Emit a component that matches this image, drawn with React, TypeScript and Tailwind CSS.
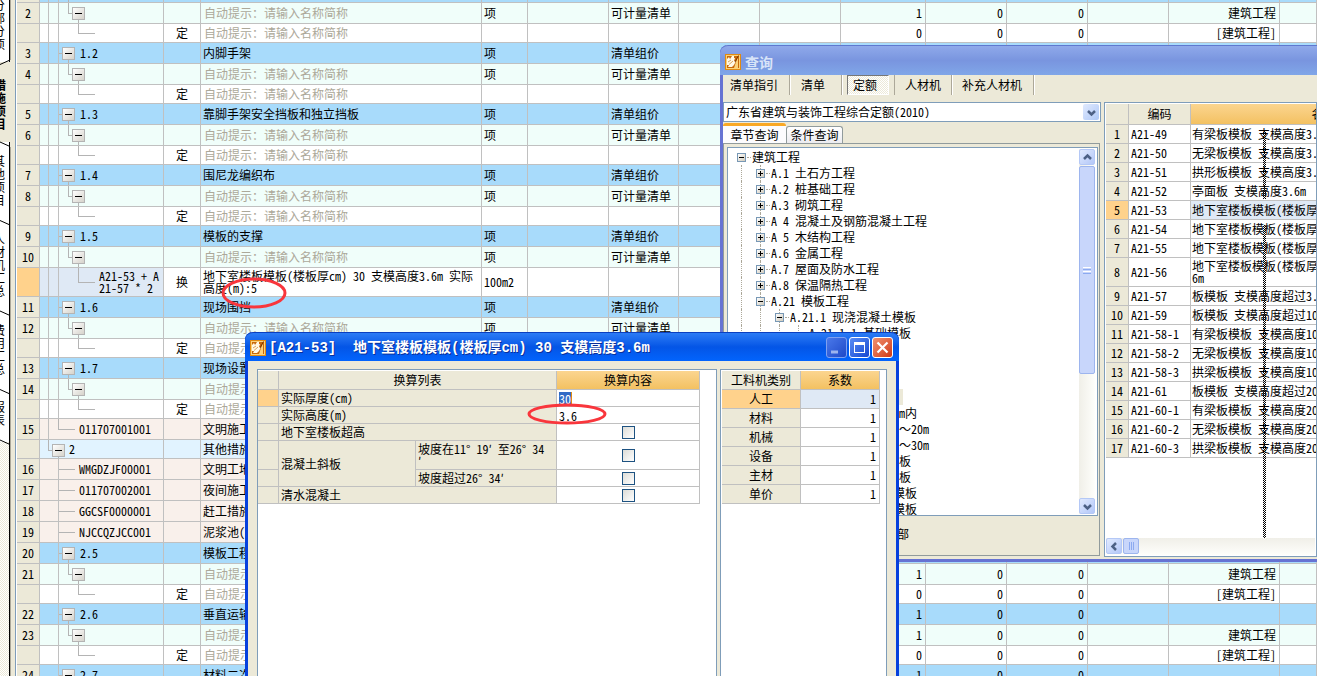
import clsx from "clsx";
import { ReactNode } from "react";

type RowKind = "group" | "item" | "quota" | "selected" | "measure" | "root" | "cut";

interface MainRow {
  kind: RowKind;
  no?: string;
  code?: string;
  name?: string;
  // section 2 of the list has one guide line less than section 1
  section?: 1 | 2;
  last?: boolean;
}

const HINT = "自动提示：请输入名称简称";

const MAIN_ROWS: MainRow[] = [
  { kind: "cut" },
  { kind: "item", no: "2" },
  { kind: "quota" },
  { kind: "group", no: "3", code: "1.2", name: "内脚手架" },
  { kind: "item", no: "4" },
  { kind: "quota" },
  { kind: "group", no: "5", code: "1.3", name: "靠脚手架安全挡板和独立挡板" },
  { kind: "item", no: "6" },
  { kind: "quota" },
  { kind: "group", no: "7", code: "1.4", name: "围尼龙编织布" },
  { kind: "item", no: "8" },
  { kind: "quota" },
  { kind: "group", no: "9", code: "1.5", name: "模板的支撑" },
  { kind: "item", no: "10" },
  { kind: "selected" },
  { kind: "group", no: "11", code: "1.6", name: "现场围挡" },
  { kind: "item", no: "12" },
  { kind: "quota" },
  { kind: "group", no: "13", code: "1.7", name: "现场设置" },
  { kind: "item", no: "14" },
  { kind: "quota" },
  { kind: "measure", no: "15", code: "011707001001", name: "文明施工", last: true },
  { kind: "root", code: "2", name: "其他措施费" },
  { kind: "measure", no: "16", code: "WMGDZJF00001", name: "文明工地增加费", section: 2 },
  { kind: "measure", no: "17", code: "011707002001", name: "夜间施工", section: 2 },
  { kind: "measure", no: "18", code: "GGCSF0000001", name: "赶工措施", section: 2 },
  { kind: "measure", no: "19", code: "NJCCQZJCC001", name: "泥浆池(槽)砌筑", section: 2 },
  { kind: "group", no: "20", code: "2.5", name: "模板工程", section: 2 },
  { kind: "item", no: "21", section: 2 },
  { kind: "quota", section: 2 },
  { kind: "group", no: "22", code: "2.6", name: "垂直运输", section: 2 },
  { kind: "item", no: "23", section: 2 },
  { kind: "quota", section: 2 },
  { kind: "group", no: "24", code: "2.7", name: "材料二次运输", section: 2 },
];

const ROW_STYLE: Record<RowKind, string> = {
  cut: "h-[3px] bg-[#a8dbfb]",
  group: "h-[21px] bg-[#a8dbfb]",
  item: "h-[21px] bg-[#f0fefa]",
  quota: "h-[19px] bg-white",
  selected: "h-[29px] bg-white",
  measure: "h-[21px] bg-[#f9f0eb]",
  root: "h-[19px] bg-[#e1f3ff]",
};

const CELL = "border-r border-b border-[#c0c0c0] p-0 overflow-hidden whitespace-nowrap";

function AppIcon() {
  return (
    <svg width="16" height="16" viewBox="0 0 16 16" className="shrink-0">
      <rect width="16" height="16" fill="#e08a12" />
      <rect x="1" y="1" width="14" height="14" fill="#fbd27a" />
      <rect x="2" y="2" width="12" height="12" fill="#c8690c" />
      <path d="M2 5 L4 3 L5 5 L7 2 L9 2 L9 4 L10 4 L9 7 L11 7 L9 11 L7 13 L3 13 L4 11 L2 11Z" fill="#fff8e6" />
      <path d="M3 8 L6 6 M4 10.500 L8 7" stroke="#d9a25c" strokeWidth="1" />
      <path d="M13 3 L11 8 L9 14 L13 14Z" fill="#fbd27a" />
      <path d="M13.500 1.500 L10 8" stroke="#7a3600" strokeWidth="1" />
    </svg>
  );
}

function Collapse({ line }: { line: boolean }) {
  return (
    <button
      aria-label="折叠"
      className={clsx(
        "relative mt-1 size-[13px] shrink-0 self-start border border-[#b4b4b4] bg-gradient-to-br from-white to-[#d6d3cb]",
        line && "after:absolute after:top-3 after:left-[5px] after:h-1 after:w-px after:bg-[#b4b4b4]"
      )}
    >
      <span className="mx-auto block h-px w-[7px] bg-black" />
    </button>
  );
}

function Stub({ w, h, d }: { w: number; h: number; d: string }) {
  return (
    <svg width={w} height={h} className="shrink-0 self-start">
      <path d={d} fill="none" stroke="#b4b4b4" shapeRendering="crispEdges" />
    </svg>
  );
}

function TreeCell({ row }: { row: MainRow }) {
  const { kind, code, section = 1, last } = row;
  const guide = <span className="w-[9px] shrink-0 self-stretch border-r border-[#c0c0c0]" />;
  if (kind === "root") {
    return (
      <div className="flex h-[18px] items-center overflow-hidden">
        <Stub w={12} h={18} d="M8.5 0 V10.5 H12" />
        <Collapse line />
        <span className="pl-1">{code}</span>
      </div>
    );
  }
  return (
    <div className={clsx("flex items-center overflow-hidden", kind === "selected" ? "h-7" : kind === "quota" ? "h-[18px]" : kind === "cut" ? "h-[2px]" : "h-5")}>
      {section === 1 ? guide : <span className="w-[9px] shrink-0" />}
      {last ? (
        <Stub w={26} h={20} d="M9.5 0 V10.5 H26" />
      ) : (
        <span className="w-[10px] shrink-0 self-stretch border-r border-[#c0c0c0]" />
      )}
      {kind === "cut" && <Stub w={12} h={2} d="M9.5 0 V2" />}
      {kind === "group" && (
        <>
          <Stub w={3} h={20} d="M0 10.5 H3" />
          <Collapse line />
          <span className="pl-[5px]">{code}</span>
        </>
      )}
      {kind === "item" && (
        <>
          <Stub w={13} h={20} d="M9.5 0 V10.5 H13" />
          <Collapse line />
        </>
      )}
      {kind === "quota" && <Stub w={36} h={18} d="M19.5 0 V9.5 H36" />}
      {kind === "selected" && (
        <>
          <Stub w={36} h={28} d="M19.5 0 V14.5 H36" />
          <span className="pl-1">
            A21-53 + A<br />
            21-57 * 2
          </span>
        </>
      )}
      {kind === "measure" && (
        <>
          {!last && <Stub w={16} h={20} d="M0 10.5 H16" />}
          <span className="pl-1">{code}</span>
        </>
      )}
    </div>
  );
}

function MainTable() {
  return (
    <table className="w-full table-fixed border-separate border-spacing-0">
      <colgroup>
        <col className="w-[23px]" />
        <col className="w-[124px]" />
        <col className="w-[37px]" />
        <col className="w-[281px]" />
        <col className="w-[46px]" />
        <col className="w-[81px]" />
        <col className="w-[70px]" />
        <col className="w-[81px]" />
        <col className="w-[81px]" />
        <col className="w-[85px]" />
        <col className="w-[81px]" />
        <col className="w-[81px]" />
        <col className="w-[81px]" />
        <col className="w-[111px]" />
        <col />
      </colgroup>
      <tbody>
        {MAIN_ROWS.map((row, i) => {
          const { kind } = row;
          const hint = kind === "item" || kind === "quota";
          const counted = hint || kind === "group";
          return (
            <tr key={i} className={ROW_STYLE[kind]}>
              <th className={clsx(CELL, "text-center font-normal", kind === "selected" ? "bg-[#ffd28c]" : "bg-[#ece9d8]")}>{row.no}</th>
              <td className={clsx(CELL, kind === "selected" && "bg-[#dfe9f5]")}>
                <TreeCell row={row} />
              </td>
              <td className={clsx(CELL, "text-center")}>{kind === "quota" ? "定" : kind === "selected" ? "换" : ""}</td>
              <td className={clsx(CELL, hint ? "pl-[3px] text-[#aca899]" : "pl-[2px]")}>
                {kind === "selected" ? (
                  <>
                    地下室楼板模板(楼板厚cm) 30 支模高度3.6m 实际
                    <br />
                    高度(m):5
                  </>
                ) : hint ? (
                  HINT
                ) : (
                  row.name
                )}
              </td>
              <td className={clsx(CELL, "pl-[2px]")}>{kind === "item" || kind === "group" ? "项" : kind === "selected" ? "100m2" : ""}</td>
              <td className={CELL} />
              <td className={clsx(CELL, "pl-[2px]")}>{kind === "item" ? "可计量清单" : kind === "group" ? "清单组价" : ""}</td>
              <td className={CELL} />
              <td className={CELL} />
              <td className={clsx(CELL, "pr-[3px] text-right")}>{counted && (kind === "quota" ? "0" : "1")}</td>
              <td className={clsx(CELL, "pr-[3px] text-right")}>{counted && "0"}</td>
              <td className={clsx(CELL, "pr-[3px] text-right")}>{counted && "0"}</td>
              <td className={CELL} />
              <td className={clsx(CELL, "pr-[3px] text-right")}>{kind === "item" ? "建筑工程" : kind === "quota" ? "[建筑工程]" : ""}</td>
              <td className={CELL} />
            </tr>
          );
        })}
      </tbody>
    </table>
  );
}

const SIDE_TABS = [
  { label: "分部分项", box: "h-[62px] bg-white pb-3" },
  { label: "措施项目", box: "h-20 bg-[#ece9d8] pb-3 font-bold", active: true },
  { label: "其他项目", box: "h-20 bg-white pb-4" },
  { label: "人材机汇总", box: "h-[91px] bg-white pb-4" },
  { label: "费用汇总", box: "h-[78px] bg-white pb-4" },
  { label: "报表", box: "h-[51px] bg-white pb-4" },
];

function SideTabs() {
  return (
    <nav className="relative flex w-[17px] shrink-0 flex-col border-r border-white bg-[#ece9d8]">
      {SIDE_TABS.map((tab) => (
        <button key={tab.label} className={clsx("flex w-[10px] shrink-0 items-end justify-end overflow-hidden pr-1", tab.box, !tab.active && "border-r border-black")}>
          <span className="w-3 shrink-0 leading-[13px] break-all">{tab.label}</span>
        </button>
      ))}
      <div className="w-[10px] grow border-r border-black bg-[image:repeating-conic-gradient(#fff_0_25%,#ece9d8_0_50%)] bg-[length:2px_2px]" />
      <svg className="absolute inset-0 h-full w-4">
        <g fill="none" stroke="#000">
          <path d="M0 64.5 L10 60 M0 142 L10 146.500 M0 220.500 L10 225 M0 311 L10 315.500 M0 389.500 L10 394 M0 440 L10 444.500" />
        </g>
        <path d="M10.5 0 V60 M10.5 147 V2000" stroke="#aca899" />
        <path d="M15.500 0 V2000" stroke="#7f9db9" />
      </svg>
    </nav>
  );
}

const QUERY_TREE: { level: number; label: string; to?: string; open?: boolean; leaf?: boolean; selected?: boolean }[] = [
  { level: 0, label: "建筑工程", open: true },
  { level: 1, label: "A.1 土石方工程" },
  { level: 1, label: "A.2 桩基础工程" },
  { level: 1, label: "A.3 砌筑工程" },
  { level: 1, label: "A 4 混凝土及钢筋混凝土工程" },
  { level: 1, label: "A 5 木结构工程" },
  { level: 1, label: "A.6 金属工程" },
  { level: 1, label: "A.7 屋面及防水工程" },
  { level: 1, label: "A.8 保温隔热工程" },
  { level: 1, label: "A.21 模板工程", open: true },
  { level: 2, label: "A.21.1 现浇混凝土模板", open: true },
  { level: 3, label: "A.21.1.1 基础模板", leaf: true },
  { level: 3, label: "A.21.1.2 柱模", leaf: true },
  { level: 3, label: "A.21.1.3 梁模", leaf: true },
  { level: 3, label: "墙模板", leaf: true },
  { level: 3, label: "A.21.1.4 板模", leaf: true, selected: true },
  { level: 3, label: "A.21.1.5 高度10m内", leaf: true },
  { level: 3, label: "A.21.1.6 高度10", to: "20m", leaf: true },
  { level: 3, label: "A.21.1.7 高度20", to: "30m", leaf: true },
  { level: 3, label: "A.21.1.8 楼梯模板", leaf: true },
  { level: 3, label: "A.21.1.9 台阶模板", leaf: true },
  { level: 3, label: "A.21.1.10 压顶模板", leaf: true },
  { level: 3, label: "A.21.1.11 栏板模板", leaf: true },
];

function QueryTree() {
  return (
    <ul className="grow overflow-hidden pt-px pl-1">
      {QUERY_TREE.map((node) => (
        <li key={node.label} className="flex h-4 items-center whitespace-nowrap">
          {Array.from({ length: node.level }, (_, i) => (
            <span key={i} className="flex w-[19px] shrink-0 justify-center self-stretch">
              <span className="border-l border-dotted border-[#aca899]" />
            </span>
          ))}
          <span className="relative flex w-[19px] shrink-0 items-center justify-center self-stretch">
            {node.level > 0 && <span className="absolute top-0 left-[9px] h-full border-l border-dotted border-[#aca899]" />}
            <span className="absolute top-2 right-0 w-1 border-t border-dotted border-[#aca899]" />
            {!node.leaf && (
              <button aria-label="展开" className="relative flex size-[9px] items-center justify-center border border-[#7898b5] bg-gradient-to-br from-white to-[#d0cabb]">
                <svg width="5" height="5" shapeRendering="crispEdges">
                  <path d={node.open ? "M0 2.500 H5" : "M0 2.500 H5 M2.500 0 V5"} stroke="#000" />
                </svg>
              </button>
            )}
          </span>
          <span className={clsx("pl-px", node.selected && "bg-[#ece9d8] py-[2px] pr-4")}>
            {node.label}
            {node.to && (
              <>
                <span className="[font-feature-settings:normal]">～</span>
                {node.to}
              </>
            )}
          </span>
        </li>
      ))}
    </ul>
  );
}

const CHEVRON = {
  up: "M3 8 L6.500 4.500 L10 8",
  down: "M3 5 L6.500 8.500 L10 5",
  left: "M8 3 L4.500 6.500 L8 10",
};

function ScrollButton({ dir }: { dir: keyof typeof CHEVRON }) {
  return (
    <button aria-label={dir} className="flex size-4 shrink-0 items-center justify-center rounded-[2px] border border-[#b4c8f6] bg-gradient-to-br from-[#e1eafe] to-[#b3c7f8]">
      <svg width="13" height="13">
        <path d={CHEVRON[dir]} fill="none" stroke="#4d6185" strokeWidth="2.500" />
      </svg>
    </button>
  );
}

const QUOTAS = [
  ["A21-49", "有梁板模板 支模高度3.6m"],
  ["A21-50", "无梁板模板 支模高度3.6m"],
  ["A21-51", "拱形板模板 支模高度3.6m"],
  ["A21-52", "亭面板 支模高度3.6m"],
  ["A21-53", "地下室楼板模板(楼板厚cm) 30 支模高度3.6m"],
  ["A21-54", "地下室楼板模板(楼板厚cm) 40 支模高度3.6m"],
  ["A21-55", "地下室楼板模板(楼板厚cm) 50 支模高度3.6m"],
  ["A21-56", "地下室楼板模板(楼板厚cm) 50以上 支模高度3.\n6m"],
  ["A21-57", "板模板 支模高度超过3.6m 每增加1m"],
  ["A21-59", "板模板 支模高度超过10m 每增加1m"],
  ["A21-58-1", "有梁板模板 支模高度10m"],
  ["A21-58-2", "无梁板模板 支模高度10m"],
  ["A21-58-3", "拱梁板模板 支模高度10m"],
  ["A21-61", "板模板 支模高度超过20m"],
  ["A21-60-1", "有梁板模板 支模高度20m"],
  ["A21-60-2", "无梁板模板 支模高度20m"],
  ["A21-60-3", "拱梁板模板 支模高度20m"],
];

const ORANGE_HEAD = "bg-gradient-to-b from-[#fbd58f] to-[#f3c161]";
const DITHER = "bg-[image:repeating-conic-gradient(#000_0_25%,transparent_0_50%)] bg-[length:2px_2px]";

function QuotaTable() {
  return (
    <div className="relative flex h-[455px] grow flex-col overflow-hidden border border-[#7f9db9] bg-white p-px">
      <table className="w-[351px] table-fixed border-separate border-spacing-0">
        <colgroup>
          <col className="w-[23px]" />
          <col className="w-[62px]" />
          <col />
        </colgroup>
        <thead>
          <tr className="h-[21px] bg-[#ece9d8]">
            <th className={CELL} />
            <th className={clsx(CELL, "font-normal")}>编码</th>
            <th className={clsx(CELL, ORANGE_HEAD, "font-normal")}>名称</th>
          </tr>
        </thead>
        <tbody>
          {QUOTAS.map(([code, name], i) => (
            <tr key={code} className={i === 7 ? "h-[29px]" : "h-[19px]"}>
              <th className={clsx(CELL, "font-normal", i === 4 ? "bg-[#ffd28c]" : "bg-[#ece9d8]")}>{i + 1}</th>
              <td className={clsx(CELL, "pl-[2px]")}>{code}</td>
              <td className={clsx(CELL, "pl-px whitespace-pre", i === 4 && "bg-[#dfe9f5]")}>{name}</td>
            </tr>
          ))}
        </tbody>
      </table>
      <div className={clsx("absolute top-7 left-[158px] h-[68px] w-[3px]", DITHER)} />
      <div className={clsx("absolute top-[122px] left-[158px] h-[313px] w-[3px]", DITHER)} />
      <div className="mt-auto flex h-[17px] gap-px bg-gradient-to-b from-[#f0efe8] to-[#fefefb]">
        <ScrollButton dir="left" />
        <button aria-label="滚动条" className="flex size-4 items-center justify-center gap-px rounded-[2px] border border-[#9db5ee] bg-[#c8d6fb]">
          <span className="h-2 w-px bg-[#8caaf0]" />
          <span className="h-2 w-px bg-[#8caaf0]" />
          <span className="h-2 w-px bg-[#8caaf0]" />
        </button>
      </div>
    </div>
  );
}

function ToolButton({ children, className }: { children: ReactNode; className: string }) {
  return (
    <div className={clsx("flex border-[#aca899] shadow-[1px_0_0_#fff]", className)}>
      <button className="h-5">{children}</button>
    </div>
  );
}

function QueryWindow() {
  return (
    <section className="absolute top-[45px] right-0 left-[720px] rounded-tl-lg border-b-[3px] border-l-[3px] border-[#6673d3] bg-[#ece9d8]">
      <header className="-ml-[3px] flex h-[30px] items-center gap-1 rounded-tl-lg border-t border-[#5f78cf] bg-gradient-to-b from-[#8fa9ea] via-[#7995df] to-[#80a6e8] pt-[2px] pl-[5px]">
        <AppIcon />
        <h2 className="text-sm leading-4 font-bold text-[#d8e4f8]">查询</h2>
      </header>
      <div className="flex h-[27px] items-start gap-[5px]">
        <ToolButton className="border-r pr-[11px] pl-[7px]">清单指引</ToolButton>
        <ToolButton className="w-[47px] border-r pl-[6px]">清单</ToolButton>
        <button className="h-5 w-[42px] border border-t-[#777] border-r-white border-b-white border-l-[#777] bg-[image:repeating-conic-gradient(#fff_0_25%,#ece9d8_0_50%)] bg-[length:2px_2px] pl-[5px] text-left">
          定额
        </button>
        <ToolButton className="w-[58px] border-x pl-[10px]">人材机</ToolButton>
        <ToolButton className="border-r pr-[11px] pl-[5px]">补充人材机</ToolButton>
      </div>
      <div className="flex gap-[3px] pb-[2px]">
        <div className="w-[378px] shrink-0">
          <div className="relative h-5">
            <select aria-label="定额库" className="h-5 w-full appearance-none rounded-none border border-[#7f9db9] bg-white px-[2px]">
              <option>广东省建筑与装饰工程综合定额(2010)</option>
            </select>
            <span className="pointer-events-none absolute top-[2px] right-[2px] flex size-4 items-center justify-center rounded-[2px] bg-gradient-to-br from-[#e1eafe] to-[#aec8f7]">
              <svg width="13" height="13">
                <path d={CHEVRON.down} fill="none" stroke="#4d6185" strokeWidth="2.500" />
              </svg>
            </span>
          </div>
          <div className="flex h-[21px] items-end pt-[2px]">
            <button className="h-5 w-[63px] rounded-t-[3px] border-t-[3px] border-[#f9a825] bg-[#fcfcfe]">章节查询</button>
            <button className="h-[17px] w-[57px] rounded-t-[3px] border border-b-0 border-[#919b9c] bg-gradient-to-b from-white to-[#ececf0]">条件查询</button>
          </div>
          <div className="mr-px flex h-[413px] flex-col border border-[#919b9c] bg-[#ece9d8]">
            <div className="mt-[3px] mr-px ml-[3px] flex h-[369px] border border-[#7f9db9] bg-white">
              <QueryTree />
              <div className="mt-px mr-[2px] mb-px flex w-4 shrink-0 flex-col bg-gradient-to-r from-[#f0efe8] to-[#fefefb]">
                <ScrollButton dir="up" />
                <button aria-label="滚动条" className="mt-px flex h-[208px] flex-col items-center justify-center gap-px rounded-[2px] border border-[#9db5ee] bg-[#c8d6fb]">
                  <span className="h-px w-2 bg-white" />
                  <span className="h-px w-2 bg-[#8caaf0]" />
                  <span className="h-px w-2 bg-white" />
                  <span className="h-px w-2 bg-[#8caaf0]" />
                </button>
                <div className="mt-auto flex">
                  <ScrollButton dir="down" />
                </div>
              </div>
            </div>
            <div className="flex grow items-center pb-1 pl-[161px]">全部</div>
          </div>
        </div>
        <QuotaTable />
      </div>
    </section>
  );
}

const FIELD = "border-r border-b border-[#c0c0c0] bg-[#ece9d8] p-0 pl-[2px] text-left font-normal overflow-hidden whitespace-nowrap";
const CHECK =
  "block mx-auto size-[13px] appearance-none border border-[#1d5281] bg-gradient-to-br from-[#dcdcd7] to-white";

function ConvertTable() {
  return (
    <table className="w-[442px] table-fixed border-separate border-spacing-0">
      <colgroup>
        <col className="w-[21px]" />
        <col className="w-[137px]" />
        <col className="w-[141px]" />
        <col className="w-[143px]" />
      </colgroup>
      <thead>
        <tr className="h-[19px] bg-[#ece9d8]">
          <th className={CELL} />
          <th colSpan={2} className={clsx(CELL, "font-normal")}>换算列表</th>
          <th className={clsx(CELL, ORANGE_HEAD, "font-normal")}>换算内容</th>
        </tr>
      </thead>
      <tbody>
        <tr className="h-[17px]">
          <td className={clsx(CELL, "bg-[#ffd28c]")} />
          <th colSpan={2} className={FIELD}><label htmlFor="thickness">实际厚度(cm)</label></th>
          <td className={clsx(CELL, "pl-[2px]")}>
            <input id="thickness" defaultValue="30" className="block h-[13px] w-[13px] border-r border-[#e08a12] bg-[#316ac5] text-white" />
          </td>
        </tr>
        <tr className="h-[17px]">
          <td className={clsx(CELL, "bg-[#ece9d8]")} />
          <th colSpan={2} className={FIELD}><label htmlFor="height">实际高度(m)</label></th>
          <td className={clsx(CELL, "pl-[2px]")}>
            <input id="height" defaultValue="3.6" className="block h-[13px] w-full" />
          </td>
        </tr>
        <tr className="h-[17px]">
          <td className={clsx(CELL, "bg-[#ece9d8]")} />
          <th colSpan={2} className={FIELD}><label htmlFor="over">地下室楼板超高</label></th>
          <td className={CELL}><input id="over" type="checkbox" className={CHECK} /></td>
        </tr>
        <tr className="h-[29px]">
          <td className={clsx(CELL, "bg-[#ece9d8]")} />
          <th rowSpan={2} className={FIELD}>混凝土斜板</th>
          <th className={FIELD}>
            <label htmlFor="slope11">坡度在11° 19′ 至26° 34<br />′</label>
          </th>
          <td className={CELL}><input id="slope11" type="checkbox" className={CHECK} /></td>
        </tr>
        <tr className="h-[17px]">
          <td className={clsx(CELL, "bg-[#ece9d8]")} />
          <th className={FIELD}><label htmlFor="slope26">坡度超过26° 34′</label></th>
          <td className={CELL}><input id="slope26" type="checkbox" className={CHECK} /></td>
        </tr>
        <tr className="h-[17px]">
          <td className={clsx(CELL, "bg-[#ece9d8]")} />
          <th colSpan={2} className={FIELD}><label htmlFor="fair">清水混凝土</label></th>
          <td className={CELL}><input id="fair" type="checkbox" className={CHECK} /></td>
        </tr>
      </tbody>
    </table>
  );
}

function FactorTable() {
  return (
    <table className="w-[158px] table-fixed border-separate border-spacing-0">
      <thead>
        <tr className="h-[19px] bg-[#ece9d8]">
          <th className={clsx(CELL, "font-normal")}>工料机类别</th>
          <th className={clsx(CELL, ORANGE_HEAD, "font-normal")}>系数</th>
        </tr>
      </thead>
      <tbody>
        {["人工", "材料", "机械", "设备", "主材", "单价"].map((name, i) => (
          <tr key={name} className="h-[19px]">
            <th className={clsx(CELL, "font-normal", i === 0 ? "bg-[#ffd28c]" : "bg-[#ece9d8]")}>{name}</th>
            <td className={clsx(CELL, "pr-[3px] text-right", i === 0 && "bg-[#dfe9f5]")}>1</td>
          </tr>
        ))}
      </tbody>
    </table>
  );
}

function ConvertDialog() {
  return (
    <section className="absolute top-[332px] bottom-0 left-[245px] flex w-[654px] flex-col rounded-t-lg border-x-[3px] border-[#0640dd] bg-[#ece9d8]">
      <header className="-mx-[3px] flex h-[29px] shrink-0 items-center rounded-t-lg border-t border-[#0a3fc0] bg-gradient-to-b from-[#2b7bf5] via-[#0455e6] to-[#0264fd] pt-px pr-[6px] pl-[5px]">
        <AppIcon />
        <h2 className="grow pl-[3px] font-['Liberation_Mono','Noto_Sans_CJK_SC',monospace] text-sm leading-4 font-bold whitespace-pre text-white [text-shadow:1px_1px_#0a2f9a]">
          [A21-53]  地下室楼板模板(楼板厚cm) 30 支模高度3.6m
        </h2>
        <div className="flex gap-[2px]">
          <button aria-label="最小化" className="size-[21px] rounded-[3px] border border-[#7fa0f0] bg-gradient-to-br from-[#4a78ea] to-[#1f48c8]">
            <svg width="19" height="19"><path d="M4 14 H11" stroke="#9db4ee" strokeWidth="3" /></svg>
          </button>
          <button aria-label="最大化" className="size-[21px] rounded-[3px] border border-white bg-gradient-to-br from-[#5a8cf5] to-[#1746d0]">
            <svg width="19" height="19">
              <rect x="4.500" y="4.500" width="10" height="10" fill="none" stroke="#fff" />
              <path d="M4 5.500 H15" stroke="#fff" strokeWidth="3" />
            </svg>
          </button>
          <button aria-label="关闭" className="size-[21px] rounded-[3px] border border-white bg-gradient-to-br from-[#f0906e] to-[#cf3510]">
            <svg width="19" height="19"><path d="M4.500 4.500 L14.500 14.500 M14.500 4.500 L4.500 14.500" stroke="#fff" strokeWidth="2.200" /></svg>
          </button>
        </div>
      </header>
      <div className="flex grow gap-[3px] px-[9px] pt-2">
        <div className="grow border border-b-0 border-[#7f9db9] bg-white pt-px">
          <ConvertTable />
        </div>
        <div className="w-[167px] border border-b-0 border-[#7f9db9] bg-white pt-px pl-px">
          <FactorTable />
        </div>
      </div>
    </section>
  );
}

export default function App() {
  return (
    <main className="relative flex h-screen overflow-hidden bg-white font-['Noto_Sans_CJK_SC',sans-serif] text-[12px] leading-3 text-black [font-feature-settings:'hwid']">
      <SideTabs />
      <div className="grow overflow-hidden">
        <MainTable />
      </div>
      <QueryWindow />
      <svg className="pointer-events-none absolute top-[276px] left-[220px] h-[34px] w-[68px]">
        <ellipse cx="34" cy="17" rx="31" ry="14" fill="none" stroke="#f9363c" strokeWidth="3" />
      </svg>
      <ConvertDialog />
      <svg className="pointer-events-none absolute top-[402px] left-[526px] h-[24px] w-[82px]">
        <ellipse cx="41" cy="12" rx="38" ry="9" fill="none" stroke="#f9363c" strokeWidth="3" />
      </svg>
    </main>
  );
}
